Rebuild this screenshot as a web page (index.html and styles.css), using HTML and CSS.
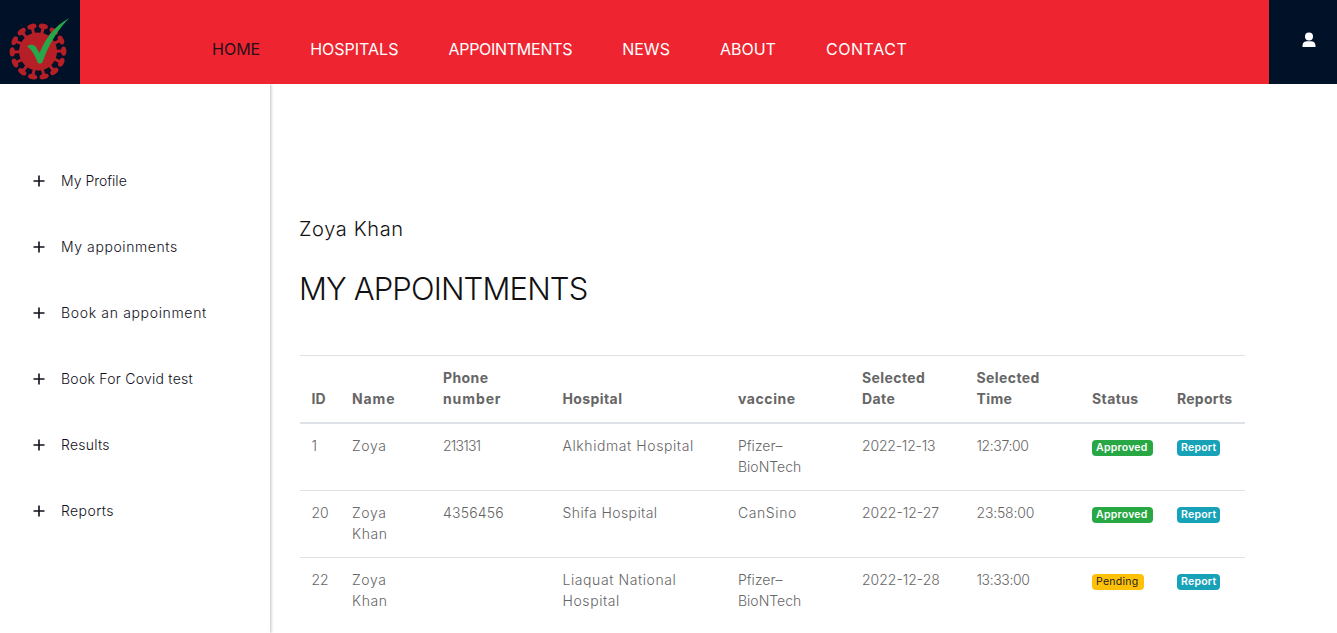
FILE: index.html
```html
<!DOCTYPE html>
<html lang="en">
<head>
<meta charset="utf-8">
<title>My Appointments</title>
<link rel="stylesheet" href="styles.css">
</head>
<body>
<header class="header">
  <a class="logo" href="#" aria-label="Home">
    <svg width="80" height="84" viewBox="0 0 80 84">
      <g fill="#b71f26" transform="rotate(12 38 51.500) translate(0 .5)">
        <circle cx="38" cy="51" r="19"/>
        <g id="spike"><path d="M36.500 33V27h3v6z"/><ellipse cx="38" cy="25.300" rx="4.700" ry="2.700"/></g>
        <use href="#spike" transform="rotate(25.7 38 51)"/>
        <use href="#spike" transform="rotate(51.4 38 51)"/>
        <use href="#spike" transform="rotate(77.1 38 51)"/>
        <use href="#spike" transform="rotate(102.9 38 51)"/>
        <use href="#spike" transform="rotate(128.6 38 51)"/>
        <use href="#spike" transform="rotate(154.3 38 51)"/>
        <use href="#spike" transform="rotate(180 38 51)"/>
        <use href="#spike" transform="rotate(205.7 38 51)"/>
        <use href="#spike" transform="rotate(231.4 38 51)"/>
        <use href="#spike" transform="rotate(257.1 38 51)"/>
        <use href="#spike" transform="rotate(282.9 38 51)"/>
        <use href="#spike" transform="rotate(308.6 38 51)"/>
        <use href="#spike" transform="rotate(334.3 38 51)"/>
      </g>
      <path fill="#26a84a" d="M27 46.500c3-2.500 6.500-2.500 9 .5l3.500 6C46 38 54 26 69.500 18 58 29 49 44 42.500 62c-1 2-4 2-5 0-3-7-5.500-12.500-10.500-15.500z"/>
    </svg>
  </a>
  <nav class="nav">
    <a class="nav-link active" href="#">HOME</a>
    <a class="nav-link" href="#">HOSPITALS</a>
    <a class="nav-link narrow" href="#">APPOINTMENTS</a>
    <a class="nav-link" href="#">NEWS</a>
    <a class="nav-link" href="#">ABOUT</a>
    <a class="nav-link ls6" href="#">CONTACT</a>
  </nav>
  <a class="user" href="#" aria-label="Account">
    <svg width="14" height="16" viewBox="0 0 14 16" fill="#fff"><circle cx="7" cy="4.500" r="4"/><path d="M.5 15v-1.500C.5 10.800 2.500 9.300 5 9.300h4c2.500 0 4.500 1.500 4.500 4.200V15z"/></svg>
  </a>
</header>
<div class="layout">
  <aside class="sidebar">
    <a class="side-link" href="#"><svg class="plus" viewBox="0 0 12 12"><path d="M6 .5v11M.5 6h11"/></svg><span>My Profile</span></a>
    <a class="side-link" href="#"><svg class="plus" viewBox="0 0 12 12"><path d="M6 .5v11M.5 6h11"/></svg><span class="ls6">My appoinments</span></a>
    <a class="side-link" href="#"><svg class="plus" viewBox="0 0 12 12"><path d="M6 .5v11M.5 6h11"/></svg><span class="ls7">Book an appoinment</span></a>
    <a class="side-link" href="#"><svg class="plus" viewBox="0 0 12 12"><path d="M6 .5v11M.5 6h11"/></svg><span class="ls3">Book For Covid test</span></a>
    <a class="side-link" href="#"><svg class="plus" viewBox="0 0 12 12"><path d="M6 .5v11M.5 6h11"/></svg><span class="ls3">Results</span></a>
    <a class="side-link" href="#"><svg class="plus" viewBox="0 0 12 12"><path d="M6 .5v11M.5 6h11"/></svg><span class="ls4">Reports</span></a>
  </aside>
  <main class="main">
    <h5 class="user-name">Zoya Khan</h5>
    <h2 class="title">MY APPOINTMENTS</h2>
    <table class="table">
      <colgroup><col class="c-id"><col class="c-name"><col class="c-phone"><col class="c-hospital"><col class="c-vaccine"><col class="c-date"><col class="c-time"><col class="c-status"><col class="c-reports"></colgroup>
      <thead>
        <tr><th>ID</th><th class="ls9">Name</th><th><span class="ls4">Phone</span><br><span class="ls9">number</span></th><th class="ls4">Hospital</th><th class="ls6">vaccine</th><th class="ls4">Selected<br>Date</th><th class="ls4">Selected<br>Time</th><th class="ls4">Status</th><th class="ls3">Reports</th></tr>
      </thead>
      <tbody>
        <tr><td>1</td><td class="ls6">Zoya</td><td class="tight">213131</td><td class="ls6">Alkhidmat Hospital</td><td>Pfizer–<br>BioNTech</td><td class="date">2022-12-13</td><td class="time">12:37:00</td><td><span class="badge approved">Approved</span></td><td><span class="badge report">Report</span></td></tr>
        <tr><td>20</td><td class="ls6">Zoya<br>Khan</td><td class="phone">4356456</td><td class="ls4">Shifa Hospital</td><td class="ls6">CanSino</td><td>2022-12-27</td><td class="date">23:58:00</td><td><span class="badge approved">Approved</span></td><td><span class="badge report">Report</span></td></tr>
        <tr><td>22</td><td class="ls6">Zoya<br>Khan</td><td></td><td class="ls6">Liaquat National<br>Hospital</td><td>Pfizer–<br>BioNTech</td><td>2022-12-28</td><td class="time">13:33:00</td><td><span class="badge pending">Pending</span></td><td><span class="badge report">Report</span></td></tr>
      </tbody>
    </table>
  </main>
</div>
</body>
</html>
```
FILE: styles.css
```css
* { box-sizing: border-box; }
body { margin: 0; height: 633px; overflow: hidden; background: #fff; color: #666; font: 400 14px/21px Inter, sans-serif; }
a { text-decoration: none; color: inherit; }
.ls3 { letter-spacing: .25px; }
.ls4 { letter-spacing: .4px; }
.ls6 { letter-spacing: .58px; }
.ls7 { letter-spacing: .66px; }
.ls9 { letter-spacing: .9px; }
.header { display: flex; height: 84px; background: #ee2530; }
.logo { width: 80px; background: #001128; }
.logo svg { display: block; }
.nav { flex: 1; display: flex; gap: 50px; padding: 37px 0 0 132px; color: #fff; font-size: 16px; line-height: 24px; }
.nav-link.active { color: #26101c; }
.nav-link.narrow { letter-spacing: -.28px; }
.user { width: 68px; background: #001128; display: flex; justify-content: center; padding: 32px 0 0 12px; }
.layout { display: flex; height: 549px; }
.sidebar { width: 270px; padding: 64px 0 0 33px; box-shadow: 1px 0 3px rgba(0, 0, 0, .25); clip-path: inset(0 -8px 0 0); color: #10101a; font-weight: 350; }
.side-link { display: flex; align-items: center; gap: 16px; height: 66px; }
.side-link span { padding-bottom: 2px; }
.plus { width: 12px; height: 12px; fill: none; stroke: #10101a; stroke-width: 1.6; }
.main { padding: 130px 0 0 30px; }
.user-name { margin: 0 0 0 -1px; font-size: 20px; font-weight: 300; line-height: 30px; letter-spacing: .65px; color: #111; }
.title { margin: 21px 0 0 -1px; font-size: 31px; font-weight: 300; line-height: 48px; letter-spacing: -.85px; color: #111; }
.table { width: 945px; margin-top: 42px; table-layout: fixed; border-collapse: separate; border-spacing: 0; }
.table th { padding: 11px 0 13px 11.5px; text-align: left; vertical-align: bottom; font-weight: 700; border-top: 1px solid #dee2e6; border-bottom: 2px solid #dee2e6; }
.table td { padding: 11px 0 13px 11.5px; vertical-align: top; font-weight: 350; border-top: 1px solid #dee2e6; }
.table tbody tr:first-child td { border-top: 0; }
.table .tight { letter-spacing: -.8px; }
.table .phone { letter-spacing: .2px; }
.table .date { letter-spacing: -.18px; }
.table .time { letter-spacing: -.4px; }
.c-id { width: 40.5px; }
.c-name { width: 91px; }
.c-phone { width: 119.5px; }
.c-hospital { width: 175.5px; }
.c-vaccine { width: 124px; }
.c-date { width: 114.5px; }
.c-time { width: 115.5px; }
.c-status { width: 85px; }
.c-reports { width: 79.5px; }
.badge { display: block; height: 16px; margin-top: 5px; padding: 0 4px; border-radius: 4px; font-size: 10.5px; line-height: 16px; font-weight: 600; letter-spacing: .25px; color: #fff; }
.approved { background: #28a745; width: 61px; }
.report { background: #17a2b8; width: 43px; }
.pending { background: #ffc107; width: 52px; color: #212529; font-weight: 400; }
```
